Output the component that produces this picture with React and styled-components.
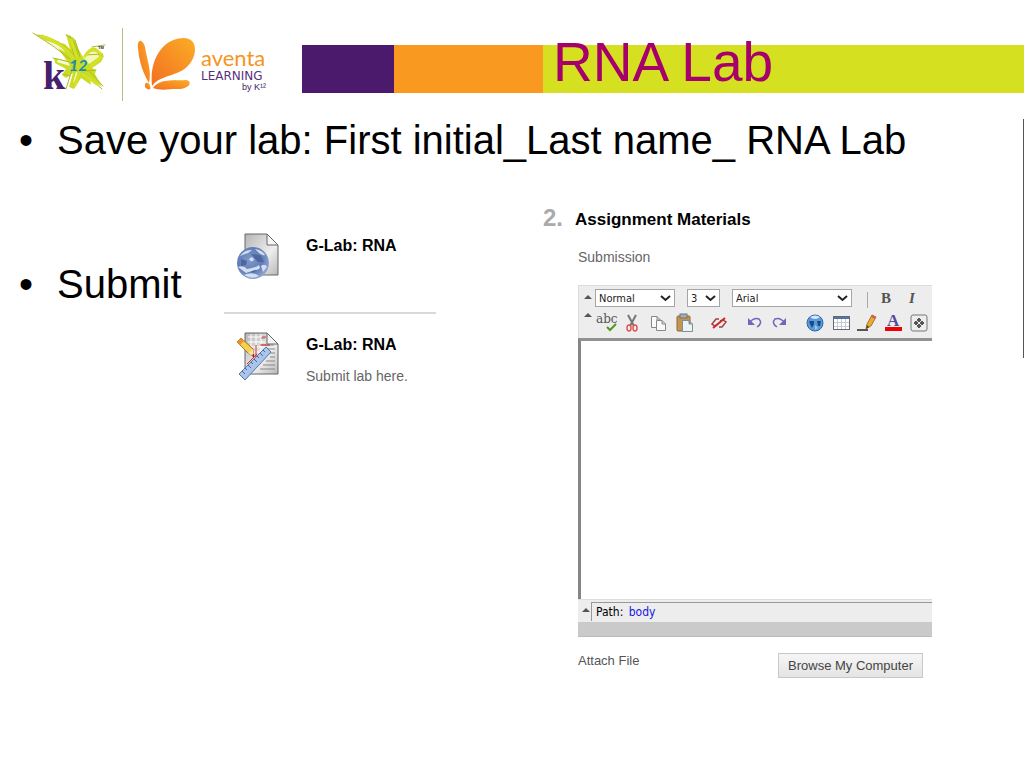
import React from 'react';
import styled, { createGlobalStyle } from 'styled-components'

const GlobalStyle = createGlobalStyle`
  * {
    box-sizing: border-box;
  }

  body {
    margin: 0;
    background: #fff;
    color: #000;
    font-family: "Liberation Sans", Arial, sans-serif;
  }
`

const Header = styled.header`
  display: flex;
  align-items: flex-start;
  padding: 28px 0 16px 30px;
`

const Brand = styled.div`
  flex: 0 0 272px;
  display: flex;
  align-items: flex-start;

  svg {
    flex: none;
    display: block;
  }
`

const BrandDivider = styled.div`
  width: 1px;
  height: 73px;
  margin: 0 13px 0 10px;
  background: #b9bd83;
`

const Aventa = styled.div`
  display: flex;
  flex-direction: column;
  width: 65px;
  margin: 18px 0 0 4px;
  color: #f7941e;
  font-family: Lato, sans-serif;
  font-size: 22px;
  line-height: 24px;

  span {
    color: #55307c;
    font-family: "DejaVu Sans", sans-serif;
    font-size: 12px;
    line-height: 12px;
  }

  small {
    align-self: flex-end;
    color: #3b1a6b;
    font-family: "Liberation Sans", sans-serif;
    font-size: 9px;
    line-height: 10px;
  }
`

const Banner = styled.div`
  flex: 1;
  display: grid;
  grid-template-columns: 92fr 149fr 481fr;
  height: 48px;
  margin-top: 17px;
`

const Band = styled.div`
  background: ${({ color }) => color};
`

const Title = styled.h1`
  margin: 0;
  padding-left: 10px;
  color: #a6006b;
  font-size: 55px;
  font-weight: normal;
  line-height: 34px;
`

const Body = styled.main`
  display: flex;
  align-items: flex-start;
`

const Bullets = styled.ul`
  flex: 1;
  min-width: 0;
  margin: 0;
  padding: 0;
  list-style: none;
`

const Bullet = styled.p`
  display: flex;
  margin: 0;
  padding-left: 19px;
  font-size: 40px;
  line-height: 46px;
  white-space: nowrap;

  &::before {
    content: '•';
    flex: 0 0 38px;
  }
`

const Edge = styled.div`
  width: 1px;
  height: 239px;
  margin-top: 2px;
  background: #555;
`

const Columns = styled.div`
  display: grid;
  grid-template-columns: 17fr 15fr;
`

const SubmitColumn = styled.div`
  display: grid;
  grid-template-columns: 224px minmax(0, 212px);
  align-items: start;
  padding-top: 62px;

  > p {
    margin-top: 36px;
  }
`

const Labs = styled.ul`
  margin: 0;
  padding: 0;
  list-style: none;
`

const LabItem = styled.li`
  display: flex;
  gap: 22px;
  padding: 7px 0 32px 12px;

  & + & {
    padding-top: 17px;
    border-top: 2px solid #d9d9d9;
  }

  svg {
    flex: none;
  }

  h2 {
    margin: 0;
    font-size: 16px;
    line-height: 28px;
  }

  p {
    margin: 9px 0 0;
    color: #666;
    font-size: 14px;
    line-height: 16px;
  }
`

const Panel = styled.section`
  padding: 43px 91px 0 2px;
`

const PanelHeading = styled.h2`
  display: flex;
  margin: 0;
  font-size: 17px;
  line-height: 28px;

  span {
    flex: 0 0 32px;
    color: #aaa;
    font-size: 24px;
    line-height: 24px;
  }
`

const PanelBody = styled.div`
  padding: 15px 0 0 35px;
`

const Label = styled.label`
  display: block;
  color: #666;
  font-size: 14px;
  line-height: 16px;
`

const AttachLabel = styled.span`
  color: #555;
  font-size: 13px;
  line-height: 16px;
`

const Editor = styled.div`
  margin: 20px 0 16px;
  overflow: hidden;
  background: #ededed;
  font-family: "DejaVu Sans Condensed", "DejaVu Sans", sans-serif;
  font-size: 11px;
`

const Toolbar = styled.div`
  height: 53px;
  padding: 3px 0 0 5px;
  border-top: 1px solid #dcdcdc;
  border-left: 1px solid #dcdcdc;
`

const ToolRow = styled.div`
  display: flex;
  align-items: center;
  height: ${({ $tall }) => $tall ? '32px' : '18px'};
`

const Collapse = styled.button`
  flex: none;
  align-self: flex-start;
  width: ${({ $wide }) => $wide ? '11px' : '9px'};
  height: 16px;
  padding: 0;
  border: 0;
  background: none;

  &::before {
    content: '';
    display: block;
    width: 0;
    border: 4px solid transparent;
    border-top: 0;
    border-bottom-color: #555;
  }
`

const SelectBox = styled.div`
  flex: none;
  display: grid;
  align-items: center;
  width: ${({ width }) => width}px;
  margin-right: 12px;

  select, svg {
    grid-area: 1 / 1;
  }

  select {
    appearance: none;
    width: 100%;
    height: 18px;
    padding: 0 3px;
    border: 1px solid #a5a5a5;
    border-radius: 0;
    background: #fff;
    color: #222;
    font: inherit;
  }

  svg {
    justify-self: end;
    margin-right: 4px;
    pointer-events: none;
  }
`

const Separator = styled.div`
  flex: none;
  width: 1px;
  height: 16px;
  margin: 3px 5px 0 3px;
  background: #aaa;
`

const Tool = styled.button`
  flex: none;
  display: flex;
  align-items: center;
  justify-content: center;
  width: 26px;
  height: 22px;
  margin-left: ${({ $gap }) => $gap ? '9px' : '0'};
  padding: 0;
  border: 0;
  background: none;
  color: #555;
  font-family: "Liberation Serif", serif;
  font-size: 15px;
  font-weight: bold;
  font-style: ${({ $italic }) => $italic ? 'italic' : 'normal'};
`

const TextArea = styled.textarea`
  display: block;
  width: 100%;
  height: 261px;
  border: 0;
  border-top: 3px solid #929292;
  border-left: 3px solid #858585;
  background: #fff;
  resize: none;
  outline: none;
`

const PathRow = styled.div`
  display: flex;
  height: 23px;
  padding: 2px 0 1px 4px;
  border-top: 1px solid #ddd;

  p {
    flex: 1;
    margin: 0;
    padding-left: 4px;
    border-top: 1px solid #999;
    border-left: 1px solid #999;
    font-size: 12px;
    line-height: 18px;
  }

  a {
    margin-left: 2px;
    color: #1515e0;
    text-decoration: none;
  }
`

const EditorFoot = styled.div`
  height: 15px;
  border-bottom: 1px solid #bbb;
  background: #cacaca;
`

const AttachRow = styled.div`
  display: flex;
  align-items: flex-start;
  justify-content: space-between;
  padding-right: 9px;
`

const BrowseButton = styled.button`
  height: 25px;
  padding: 0 9px;
  border: 1px solid #c8c8c8;
  background: linear-gradient(#f6f6f6, #e4e4e4);
  color: #444;
  font-family: inherit;
  font-size: 13px;
`


function K12Logo() {
  return (
    <svg width="82" height="73" viewBox="0 0 82 73" role="img" aria-label="k12">
      <g strokeLinejoin="round" strokeLinecap="round">
        <path d="M3 5 Q20 13 35 16 L40 21 L36 6 L44 10 L49 22 L53 29 Q60 17 66 20 L74 28 L71 34 L62 40 L66 42 L65 46 L72 59 L60 51 L61 57 L51 50 L44 61 L39 59 L43 45 L36 50 L32 47 L36 41 L25 35 L24 30 L37 33 L28 20 Z" fill="#cbdc24" />
        <path d="M53 29 Q59 22 67 23 L69 29 L59 36 Z" fill="#f3f7b8" />
        <path d="M28 31 L38 34 L40 38 L27 34 Z M46 44 L50 46 L43 55 Z M14 12 L30 17 L35 24 Z" fill="#f7fad6" />
        <path d="M3 5 Q23 17 40 31 M8 7 Q31 10 46 30 M36 7 Q45 9 48 28 M40 8 L44 28 M45 12 L50 29 M62 19 L75 17 M23 30 L44 35 L36 61 M53 44 L72 61 M60 44 L73 58 M57 43 L66 42 M55 27 L73 26 L62 38 M40 48 L33 46" fill="none" stroke="#aabd20" strokeWidth="1" />
        <path d="M12 8 Q32 15 43 29 M41 12 L47 29 M53 46 L67 56 M49 44 L45 57 M61 38 L71 29 M55 28 Q62 17 71 26" fill="none" stroke="#d5e028" strokeWidth="3" />
      </g>
      <text x="13" y="61" fill="#46206e" fontFamily="Liberation Serif, serif" fontSize="40" fontWeight="bold">k</text>
      <text x="39" y="43" fill="#168bb0" fontFamily="Lato, sans-serif" fontSize="16" fontStyle="italic" fontWeight="bold">12</text>
      <text x="68" y="21" fill="#222" fontFamily="Liberation Sans, sans-serif" fontSize="4" fontWeight="bold">TM</text>
    </svg>
  );
}

function Butterfly() {
  return (
    <svg width="61" height="65" viewBox="0 0 61 65" aria-hidden="true">
      <defs>
        <linearGradient id="wing" x1="1" y1="0" x2="0" y2="1">
          <stop offset="0" stopColor="#fbad26" />
          <stop offset="1" stopColor="#f26f21" />
        </linearGradient>
      </defs>
      <g fill="url(#wing)">
        <path d="M16 58 C13 30 28 10 48 10 C60 10 62 23 55 34 C46 49 24 46 16 58 Z" />
        <path d="M2 20 C1 10 7 11 9 19 C11 32 16 43 13 55 C7 45 3 33 2 20 Z" />
        <path d="M17 60 C24 50 37 53 50 52 C57 53 54 61 42 61 C32 61 25 63 17 60 Z" />
        <path d="M9 56 C11 53 14 56 14 58 C16 63 11 62 9 59 Z" />
      </g>
    </svg>
  );
}

function PageBase() {
  return (
    <>
      <path d="M9 2 H31 L42 13 V43 H9 Z" fill="url(#sheet)" stroke="#666" />
      <path d="M31 2 V13 H42 Z" fill="#f5f5f5" stroke="#666" />
    </>
  );
}

function WebPageIcon() {
  return (
    <svg width="48" height="48" viewBox="0 0 48 48" aria-hidden="true">
      <defs>
        <linearGradient id="sheet" x1="0" y1="0" x2="1" y2="1">
          <stop offset="0" stopColor="#b5b5b5" />
          <stop offset=".6" stopColor="#eee" />
          <stop offset="1" stopColor="#b8b8b8" />
        </linearGradient>
        <radialGradient id="earth" cx=".4" cy=".4" r=".65">
          <stop offset="0" stopColor="#7f9acb" />
          <stop offset=".6" stopColor="#5f7cb5" />
          <stop offset="1" stopColor="#93a9d6" />
        </radialGradient>
      </defs>
      <PageBase />
      <circle cx="17" cy="31" r="16" fill="url(#earth)" />
      <path d="M5 27 L11 29 L10 33 L5 34 Z M15 22 L24 23 L28 30 L22 30 Z M13 37 L20 38 L17 41 Z" fill="#4d679c" />
      <path d="M4 24 Q9 17 16 18 Q13 21 9 22 Z M19 17 Q26 18 29 23 Q25 24 22 20 Z M2 35 Q8 33 11 37 Q19 36 23 33 Q26 38 19 38 L10 41 Z M8 43 Q16 39 23 44 Q16 48 8 43 Z M13 27 Q17 23 18 28 Q15 31 13 27 Z M25 34 Q29 31 31 35 L27 40 Z" fill="#d3ddf0" />
    </svg>
  );
}

function WorksheetIcon() {
  return (
    <svg width="48" height="50" viewBox="0 0 48 50" aria-hidden="true">
      <PageBase />
      <path d="M12 6 H29 M12 11 H29 M12 16 H29 M12 21 H24 M15 3 V24 M20 3 V24 M25 3 V24" stroke="#fff" />
      <path d="M25 7 H29 M24 14 H38 M30 18 H39 M32 22 H39 M34 26 H39 M30 30 H39 M27 34 H39 M24 38 H39" stroke="#888" />
      <path d="M20 14 V28 M11 33 L21 23 M26 6 H30 M25 14 H34" stroke="#dc2525" fill="none" />
      <path d="M3 43 L30 16 L35 21 L9 49 Z" fill="#a9c5ec" stroke="#5578a8" />
      <path d="M6 40 L9 43 M9 37 L11 39 M12 34 L15 37 M15 31 L17 33 M18 28 L21 31 M21 25 L23 27 M24 22 L27 25 M27 19 L29 21" stroke="#4c6794" />
      <path d="M1 11 L5 7 L17 18 L18 26 L12 22 Z" fill="#f4d04d" stroke="#9a7427" />
      <path d="M1 11 L5 7 L8 10 L4 14 Z" fill="#e99337" />
      <path d="M12 22 L17 18 L18 26 Z" fill="#f7dfb5" />
      <path d="M16 24 L18 27 L18 23 Z" fill="#b80000" />
    </svg>
  );
}

function Icon({ name }) {
  const drawings = {
    spell: (
      <>
        <text x="0" y="10" fill="#555" fontFamily="DejaVu Serif, serif" fontSize="12" fontWeight="normal">abc</text>
        <path d="M11 14 L14 17 L20 11" fill="none" stroke="#4b9b20" strokeWidth="2" />
      </>
    ),
    cut: (
      <>
        <path d="M6 2 L12 13 M14 2 L8 13" stroke="#777" strokeWidth="2" />
        <ellipse cx="7" cy="15" rx="2" ry="3" fill="none" stroke="#d55" strokeWidth="1.5" />
        <ellipse cx="13" cy="15" rx="2" ry="3" fill="none" stroke="#d55" strokeWidth="1.5" />
      </>
    ),
    copy: (
      <g fill="#fafafa" stroke="#888">
        <path d="M3.5 3.5 H9 L12.5 7 V14.5 H3.5 Z M9 3.5 V7 H12.5" />
        <path d="M8.5 7.5 H14 L17.5 11 V17.5 H8.5 Z M14 7.5 V11 H17.5" />
      </g>
    ),
    paste: (
      <>
        <rect x="3" y="3" width="13" height="15" rx="1" fill="#c59451" stroke="#8c693e" />
        <rect x="6" y="1" width="7" height="4" fill="#a6adb0" stroke="#6f777b" />
        <path d="M8.5 7.5 H15 L18.5 11 V18.5 H8.5 Z M15 7.5 V11 H18.5" fill="#edf2f5" stroke="#7c9093" />
      </>
    ),
    unlink: (
      <>
        <path d="M10 6 L7 6 L3 11 L6 13 L9 11 M10 14 L13 14 L17 9 L14 7 L11 8" fill="none" stroke="#a04040" strokeWidth="1.5" />
        <path d="M4 15 L16 5" stroke="#d2232a" strokeWidth="2" />
      </>
    ),
    undo: (
      <>
        <path d="M5 10 Q10 4 15 6 Q19 10 13 14" fill="none" stroke="#7165bc" strokeWidth="1.5" />
        <path d="M4 5 V12 H11 Z" fill="#7165bc" />
      </>
    ),
    redo: (
      <>
        <path d="M15 10 Q10 4 5 6 Q1 10 7 14" fill="none" stroke="#7165bc" strokeWidth="1.5" />
        <path d="M16 5 V12 H9 Z" fill="#7165bc" />
      </>
    ),
    globe: (
      <>
        <circle cx="10" cy="10" r="8" fill="#5b9bd8" stroke="#3169a6" />
        <path d="M5 4 Q10 1 15 4 Q10 8 5 4 Z" fill="#d6e9f8" />
        <path d="M4 8 L9 8 L9 11 L7 15 L5 11 Z M12 8 L16 8 L15 13 L13 13 Z" fill="#164d88" />
        <path d="M10 12 L13 15 L10 17 Z" fill="#9cc8ee" />
      </>
    ),
    table: (
      <>
        <rect x="2.5" y="3.5" width="16" height="13" fill="#fff" stroke="#667" />
        <path d="M3 5 H18" stroke="#5276a4" strokeWidth="2" />
        <path d="M3 9.5 H18 M3 13.5 H18 M6.5 6 V16 M10.5 6 V16 M14.5 6 V16" stroke="#c4ccd5" />
      </>
    ),
    pencil: (
      <>
        <path d="M0 17 H11" stroke="#222" strokeWidth="1.5" />
        <path d="M9 16 L10 11 L15 2 L19 4 L14 13 Z" fill="#e9aa36" stroke="#a97832" />
        <path d="M15 2 L19 4 L18 6 L14 4 Z" fill="#cf6050" />
        <path d="M9 16 L10 12 L12 14 Z" fill="#554020" />
      </>
    ),
    color: (
      <>
        <text x="4" y="13" fill="#544d9c" fontFamily="Liberation Serif, serif" fontSize="17" fontWeight="bold">A</text>
        <rect x="2" y="14" width="17" height="4" fill="#f00000" />
      </>
    ),
    gadget: (
      <>
        <rect x="2" y="2" width="16" height="16" rx="2" fill="#ededed" stroke="#777" />
        <path d="M10 4 L13 7 L10 10 L7 7 Z M10 10 L13 13 L10 16 L7 13 Z M4 10 L7 7 L10 10 L7 13 Z M10 10 L13 7 L16 10 L13 13 Z" fill="#555" stroke="#eee" />
      </>
    ),
  }

  return <svg width="20" height="20" viewBox="0 0 20 20" overflow="visible" aria-hidden="true">{drawings[name]}</svg>
}

const tools = [
  { name: 'spell', label: 'Check spelling' },
  { name: 'cut', label: 'Cut' },
  { name: 'copy', label: 'Copy' },
  { name: 'paste', label: 'Paste' },
  { name: 'unlink', label: 'Remove link', gap: true },
  { name: 'undo', label: 'Undo', gap: true },
  { name: 'redo', label: 'Redo' },
  { name: 'globe', label: 'Insert link', gap: true },
  { name: 'table', label: 'Insert table' },
  { name: 'pencil', label: 'Highlight' },
  { name: 'color', label: 'Text color' },
  { name: 'gadget', label: 'More' },
]

function Dropdown({ label, value, width }) {
  return (
    <SelectBox width={width}>
      <select aria-label={label} defaultValue={value}>
        <option>{value}</option>
      </select>
      <svg width="11" height="7" viewBox="0 0 11 7" aria-hidden="true">
        <path d="M1 1 L5.5 5 L10 1" fill="none" stroke="#222" strokeWidth="2" />
      </svg>
    </SelectBox>
  );
}

function SubmissionEditor() {
  return (
    <Editor>
      <Toolbar>
        <ToolRow>
          <Collapse $wide aria-label='Collapse text styles' />
          <Dropdown label='Paragraph style' value='Normal' width={80} />
          <Dropdown label='Font size' value='3' width={33} />
          <Dropdown label='Font' value='Arial' width={120} />
          <Separator />
          <Tool aria-label='Bold'>B</Tool>
          <Tool aria-label='Italic' $italic>I</Tool>
        </ToolRow>
        <ToolRow $tall>
          <Collapse aria-label='Collapse tools' />
          {tools.map(({ name, label, gap }) => (
            <Tool key={name} $gap={gap} aria-label={label}><Icon name={name} /></Tool>
          ))}
        </ToolRow>
      </Toolbar>
      <TextArea id='submission' />
      <PathRow>
        <Collapse aria-label='Collapse path' />
        <p>Path: <a href='#body'>body</a></p>
      </PathRow>
      <EditorFoot />
    </Editor>
  );
}

function App() {
  return (
    <>
      <GlobalStyle />
      <Header>
        <Brand>
          <K12Logo />
          <BrandDivider />
          <Butterfly />
          <Aventa>
            aventa
            <span>LEARNING</span>
            <small>by K¹²</small>
          </Aventa>
        </Brand>
        <Banner>
          <Band color='#4b1a6c' />
          <Band color='#f9991f' />
          <Band color='#d5e021'>
            <Title>RNA Lab</Title>
          </Band>
        </Banner>
      </Header>
      <Body>
        <Bullets>
          <li>
            <Bullet>Save your lab: First initial_Last name_ RNA Lab</Bullet>
          </li>
          <li>
            <Columns>
              <SubmitColumn>
                <Bullet>Submit</Bullet>
                <Labs>
                  <LabItem>
                    <WebPageIcon />
                    <h2>G-Lab: RNA</h2>
                  </LabItem>
                  <LabItem>
                    <WorksheetIcon />
                    <div>
                      <h2>G-Lab: RNA</h2>
                      <p>Submit lab here.</p>
                    </div>
                  </LabItem>
                </Labs>
              </SubmitColumn>
              <Panel>
                <PanelHeading><span>2.</span>Assignment Materials</PanelHeading>
                <PanelBody>
                  <Label htmlFor='submission'>Submission</Label>
                  <SubmissionEditor />
                  <AttachRow>
                    <AttachLabel id='attach'>Attach File</AttachLabel>
                    <BrowseButton aria-describedby='attach'>Browse My Computer</BrowseButton>
                  </AttachRow>
                </PanelBody>
              </Panel>
            </Columns>
          </li>
        </Bullets>
        <Edge />
      </Body>
    </>
  );
}

export default App;
